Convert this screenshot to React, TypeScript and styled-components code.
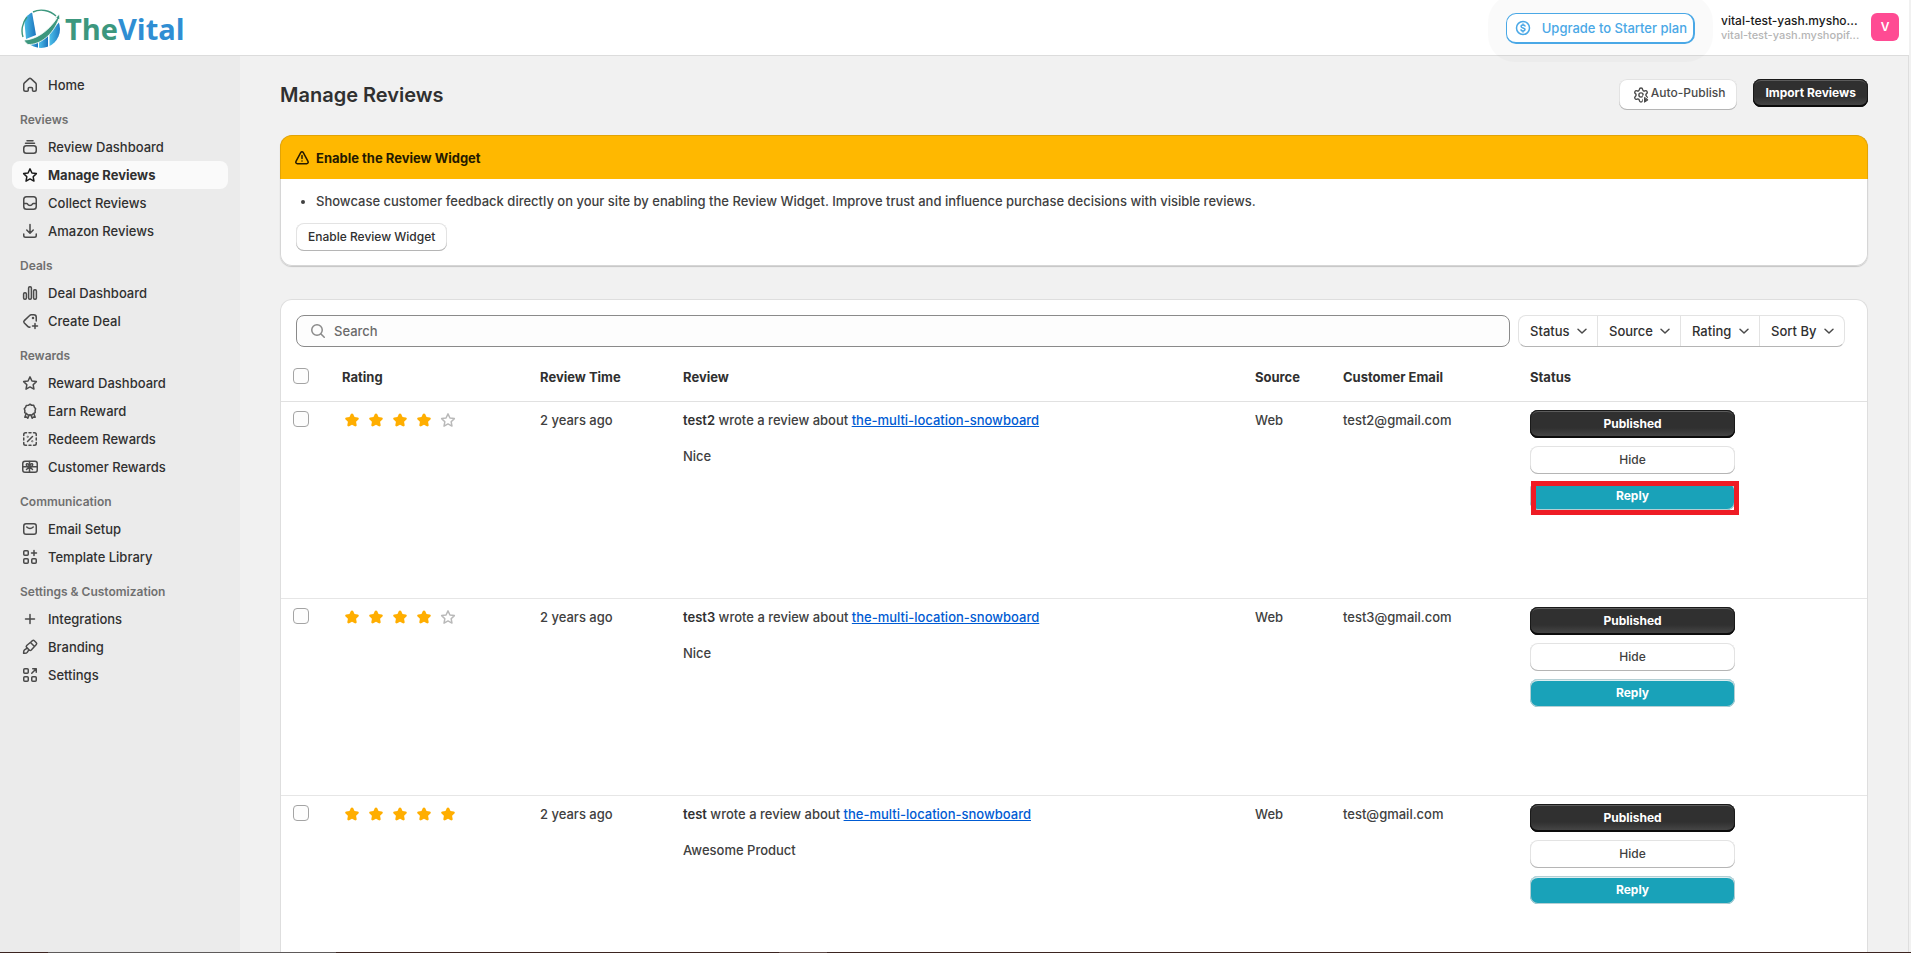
import React from "react";
import styled, { createGlobalStyle, css } from "styled-components";

const GlobalStyle = createGlobalStyle`
  *, *::before, *::after { box-sizing: border-box; }
  body {
    margin: 0;
    background: #f1f1f1;
    color: #303030;
    font-family: Inter, "Liberation Sans", sans-serif;
    font-size: 13px;
    line-height: 20px;
    font-weight: 450;
  }
  button, input, select { font: inherit; color: inherit; margin: 0; }
  button { cursor: pointer; }
  h1, h2, p, ul { margin: 0; }
`;

/* ---------- page frame ---------- */

const Page = styled.div`
  display: grid;
  grid-template-rows: auto minmax(0, 1fr) 1px;
  height: 100vh;
  overflow: hidden;
`;

const TopBar = styled.header`
  display: flex;
  align-items: flex-start;
  justify-content: space-between;
  height: 56px;
  margin-right: 2px;
  padding: 9px 10px 0 20px;
  background: #fff;
  border-bottom: 1px solid #dcdcdc;
  z-index: 1;
`;

const Body = styled.div`
  display: grid;
  grid-template-columns: 240px minmax(0, 1fr);
  min-height: 0;
  margin-right: 2px;
  border-right: 1px solid #dedede;
`;

const Taskbar = styled.div`
  background: linear-gradient(
    90deg,
    #3b2420 48px,
    #5e5a5a 48px 336px,
    #3b2420 336px 779px,
    #5e4a46 779px 827px,
    #3b2420 827px
  );
`;

/* ---------- top bar ---------- */

const Brand = styled.a`
  display: flex;
  align-items: center;
  gap: 3px;
  color: #3c977e;
  font-family: "Open Sans", "Liberation Sans", sans-serif;
  font-size: 29px;
  line-height: 38px;
  font-weight: 700;
  text-decoration: none;
`;

const BrandAccent = styled.span`
  color: #2f8ed3;
`;

const Account = styled.div`
  display: flex;
  align-items: flex-start;
  padding-top: 4px;
`;

const UpgradeButton = styled.button`
  display: flex;
  align-items: center;
  gap: 9px;
  height: 31px;
  margin-right: 26px;
  padding: 0 6px;
  background: #fff;
  border: solid #4aa8e6;
  border-width: 1px 2px 2px 1px;
  border-radius: 10px;
  box-shadow: 0 0 0 18px rgba(0, 0, 0, 0.02);
  color: #4aa8e6;
  font-weight: 550;
`;

const Store = styled.div`
  width: 138px;
  margin-right: 12px;
  padding-top: 1px;
  line-height: 14px;
  font-weight: 550;
  white-space: nowrap;
`;

const StoreName = styled.p`
  color: #1a1a1a;
  font-size: 12px;
`;

const StoreDomain = styled.p`
  color: #b5b5b5;
  font-size: 11px;
`;

const Avatar = styled.div`
  display: grid;
  place-items: center;
  width: 28px;
  height: 28px;
  background: #ff4b93;
  border-radius: 6px;
  color: #fff;
  font-size: 12px;
  font-weight: 600;
`;

/* ---------- sidebar ---------- */

const Sidebar = styled.nav`
  padding: 15px 12px;
  background: #ebebeb;
  overflow: hidden;
`;

const NavHeading = styled.h2`
  padding: 12px 8px 4px;
  color: #707070;
  font-size: 12px;
  line-height: 18px;
  font-weight: 600;
`;

const NavLink = styled.a<{ $active?: boolean }>`
  display: flex;
  align-items: center;
  gap: 8px;
  height: 28px;
  padding: 0 8px;
  border-radius: 8px;
  color: #303030;
  font-weight: 550;
  text-decoration: none;
  svg { color: #4a4a4a; }
  ${(p) =>
    p.$active &&
    css`
      background: #fafafa;
      font-weight: 650;
      svg { color: #1a1a1a; }
    `}
`;

/* ---------- main column ---------- */

const Main = styled.main`
  display: flex;
  flex-direction: column;
  min-width: 0;
  padding: 23px 40px 0;
  overflow: hidden;
`;

const TitleRow = styled.div`
  display: flex;
  flex: none;
  align-items: flex-start;
  gap: 16px;
  height: 56px;
`;

const Title = styled.h1`
  flex: 1;
  font-size: 20px;
  line-height: 32px;
  font-weight: 600;
`;

const Button = styled.button<{ $tone?: "primary" | "teal" }>`
  height: 28px;
  padding: 0 12px;
  border: 0;
  border-radius: 8px;
  background: #fff;
  box-shadow: inset 0 -1px 0 #b5b5b5, inset 0 0 0 1px #e3e3e3;
  font-size: 12px;
  line-height: 16px;
  font-weight: 550;
  white-space: nowrap;
  ${(p) =>
    p.$tone === "primary" &&
    css`
      background: linear-gradient(180deg, #303030 64%, #4a4a4a 100%);
      box-shadow: inset 0 -2px 0 #0c0c0c, inset 0 0 0 1px #1a1a1a, inset 0 2px 0 #5c5c5c;
      color: #fff;
      font-weight: 650;
    `}
  ${(p) =>
    p.$tone === "teal" &&
    css`
      background: #19a2b9;
      box-shadow: inset 0 0 0 1px #b4cfd4, inset 0 2px 0 #dcedf0;
      color: #fff;
      font-weight: 650;
    `}
`;

const PublishButton = styled.button`
  display: flex;
  align-items: flex-start;
  height: 31px;
  padding: 6px 12px;
  border: 0;
  border-radius: 8px;
  background: #fff;
  box-shadow: inset 0 -1px 0 #b5b5b5, inset 0 0 0 1px #e3e3e3;
  color: #4a4a4a;
  font-size: 12px;
  line-height: 16px;
  font-weight: 550;
`;

const Card = styled.section`
  background: #fff;
  border: 1px solid #dedede;
  border-radius: 12px;
`;

const Banner = styled(Card)`
  flex: none;
  margin-bottom: 33px;
  border-width: 0;
  box-shadow: inset 0 0 0 1px #d6d6d6, 0 1px 1px #c4c4c4;
`;

const BannerHead = styled.header`
  display: flex;
  align-items: center;
  gap: 4px;
  height: 44px;
  padding: 0 11px;
  background: #ffb800;
  border: solid #e2a406;
  border-width: 1px 1px 0;
  border-radius: 12px 12px 0 0;
  color: #251a00;
`;

const BannerTitle = styled.h2`
  font-size: 13px;
  line-height: 20px;
  font-weight: 650;
`;

const BannerBody = styled.div`
  padding: 12px 16px 15px;
`;

const Tips = styled.ul`
  margin-bottom: 12px;
  padding-left: 20px;
  color: #404040;
`;

const ReviewsCard = styled(Card)`
  flex: 1 0 auto;
  border-bottom: 0;
  border-radius: 12px 12px 0 0;
`;

/* ---------- search and filters ---------- */

const Toolbar = styled.div`
  display: flex;
  gap: 8px;
  padding: 15px 22px 0 15px;
`;

const SearchBox = styled.label`
  display: flex;
  flex: 1;
  align-items: center;
  gap: 6px;
  height: 32px;
  padding: 0 11px;
  background: #fdfdfd;
  border: 1px solid #8a8a8a;
  border-radius: 8px;
  color: #8a8a8a;
`;

const SearchInput = styled.input`
  flex: 1;
  padding: 0;
  border: 0;
  outline: 0;
  background: transparent;
  &::placeholder { color: #6a6a6a; opacity: 1; }
`;

const Filters = styled.div`
  display: flex;
  height: 32px;
  border: 1px solid #e3e3e3;
  border-bottom-color: #b5b5b5;
  border-radius: 8px;
`;

const Filter = styled.label`
  display: grid;
  align-items: center;
  & + & { border-left: 1px solid #e3e3e3; }
  svg {
    grid-area: 1 / 1;
    justify-self: end;
    margin-right: 5px;
    color: #4a4a4a;
    pointer-events: none;
  }
`;

const FilterSelect = styled.select`
  grid-area: 1 / 1;
  height: 30px;
  padding: 0 27px 0 11px;
  border: 0;
  background: transparent;
  appearance: none;
  font-weight: 550;
`;

/* ---------- reviews table ---------- */

const Table = styled.table`
  width: 100%;
  margin-top: 12px;
  border-collapse: collapse;
  table-layout: fixed;
`;

const Col = styled.col<{ $width?: number }>`
  width: ${(p) => (p.$width ? `${p.$width}px` : "auto")};
`;

const HeadCell = styled.th`
  height: 42px;
  padding: 8px 8px 13px;
  border-bottom: 1px solid #e1e1e1;
  font-weight: 650;
  text-align: left;
  vertical-align: top;
`;

const Cell = styled.td`
  height: 197px;
  padding: 8px;
  border-bottom: 1px solid #e6e6e6;
  color: #404040;
  vertical-align: top;
`;

const CheckLabel = styled.label`
  display: flex;
  padding: 1px 4px;
`;

const Checkbox = styled.input`
  width: 16px;
  height: 16px;
  background: #fdfdfd;
  border: 1px solid #a4a4a4;
  border-radius: 4px;
  appearance: none;
`;

const Stars = styled.div`
  display: flex;
  gap: 4px;
`;

const Star = styled.svg<{ $on: boolean }>`
  width: 20px;
  height: 20px;
  fill: ${(p) => (p.$on ? "#ffae00" : "none")};
  stroke: ${(p) => (p.$on ? "none" : "#b9b9b9")};
  stroke-width: 1.5;
`;

const Author = styled.strong`
  color: #303030;
  font-weight: 600;
`;

const ProductLink = styled.a`
  color: #005bd3;
  text-decoration: underline;
`;

const ReviewText = styled.p`
  margin-top: 16px;
`;

const Actions = styled.div`
  display: grid;
  gap: 8px;
  width: 205px;
`;

const ReplySlot = styled.div`
  display: grid;
  position: relative;
`;

const Highlight = styled.span`
  position: absolute;
  inset: -1px -4px -5px 1px;
  border: 5px solid #ee1c25;
  pointer-events: none;
`;

/* ---------- icons ---------- */

const STAR =
  "M11.128 4.123c-.453-.95-1.803-.95-2.256 0l-1.39 2.912-3.199.421c-1.042.138-1.46 1.422-.697 2.146l2.34 2.222-.587 3.172c-.192 1.034.901 1.828 1.825 1.327l2.836-1.54 2.836 1.54c.924.501 2.017-.293 1.825-1.327l-.587-3.172 2.34-2.222c.762-.724.345-2.008-.697-2.146l-3.2-.421-1.389-2.912Z";
const STAR_LINE =
  "M10 3.9l1.95 4.1 4.4.6-3.2 3.1.8 4.4L10 13.95 6.05 16.1l.8-4.4-3.2-3.1 4.4-.6Z";

const IconSvg = styled.svg`
  flex: none;
  width: 20px;
  height: 20px;
  fill: none;
  stroke: currentColor;
  stroke-width: 1.5;
  stroke-linecap: round;
  stroke-linejoin: round;
`;

const shapes = {
  home: (
    <path d="M3.75 9.4c0-.6.25-1.15.7-1.55l4.4-4a1.7 1.7 0 0 1 2.3 0l4.4 4c.45.4.7.95.7 1.55v5.1c0 1-.75 1.75-1.75 1.75h-1c-.55 0-1-.45-1-1V13.5a1 1 0 0 0-1-1H9.25a1 1 0 0 0-1 1v1.75c0 .55-.45 1-1 1H5.5c-1 0-1.75-.75-1.75-1.75Z" />
  ),
  stack: (
    <>
      <path d="M7 3.75h6M5.5 6.25h9" />
      <rect x="3.75" y="8.75" width="12.5" height="7.5" rx="2.5" />
    </>
  ),
  star: <path d={STAR_LINE} />,
  inbox: (
    <>
      <rect x="3.75" y="3.75" width="12.5" height="12.5" rx="2.75" />
      <path d="M4 10.5h2.6c.5 0 .8.3 1 .7.4.8 1.1 1.3 2.4 1.3s2-.5 2.4-1.3c.2-.4.5-.7 1-.7H16" />
    </>
  ),
  download: (
    <path d="M10 3.5V12M6.75 9 10 12.25 13.25 9M3.75 13v1.5c0 1 .75 1.75 1.75 1.75h9c1 0 1.75-.75 1.75-1.75V13" />
  ),
  bars: (
    <>
      <rect x="3.6" y="9.75" width="2.8" height="6.5" rx="1.2" />
      <rect x="8.6" y="3.75" width="2.8" height="12.5" rx="1.2" />
      <rect x="13.6" y="6.75" width="2.8" height="9.5" rx="1.2" />
    </>
  ),
  tag: (
    <>
      <path d="M16.25 10V6.25a2.5 2.5 0 0 0-2.5-2.5h-2.5c-.6 0-1.2.25-1.6.7L4.3 9.6a1.7 1.7 0 0 0 0 2.4l3.7 3.6c.6.6 1.4.65 2 .4M15 12.5v5M12.5 15h5" />
      <circle cx="13" cy="7" r=".5" />
    </>
  ),
  medal: (
    <>
      <path d="M10 3.25l1.7 1 2 .1.7 1.9 1.2 1.5-.5 1.9.1 2-1.8.9L12 14H8l-1.5-1.4-1.8-.9.2-2-.6-1.9 1.3-1.5.7-1.9 2-.1Z" />
      <path d="M6.2 12.5 4.8 16.3l2-.3 1 1.3L9.2 14M13.8 12.5l1.4 3.8-2-.3-1 1.3L10.800 14" />
    </>
  ),
  discount: (
    <>
      <path d="M3.75 6.5v-1c0-1 .75-1.75 1.75-1.75h1M9 3.75h2M13.5 3.75h1c1 0 1.75.75 1.75 1.75v1M16.25 9v2M16.25 13.5v1c0 1-.75 1.75-1.75 1.75h-1M11 16.25H9M6.5 16.25h-1c-1 0-1.75-.75-1.75-1.75v-1M3.75 11V9M12.5 7.5l-5 5" />
      <circle cx="7.7" cy="7.7" r=".3" />
      <circle cx="12.3" cy="12.3" r=".3" />
    </>
  ),
  gift: (
    <>
      <rect x="2.75" y="4.25" width="14.5" height="11" rx="2.25" />
      <path d="M9.5 4.5V15M3 9.75h14M9.5 9.75C8 9.5 6 9 6.3 7.5c.4-1.5 2.7-.7 3.2 2.25.5-2.95 2.8-3.75 3.2-2.25.3 1.5-1.7 2-3.2 2.25l-3 2.75M9.5 9.75l3 2.75" />
    </>
  ),
  email: (
    <>
      <rect x="3.75" y="4.75" width="12.5" height="10.5" rx="2.25" />
      <path d="M6.75 8c2 1.9 4.5 1.9 6.5 0" />
    </>
  ),
  apps: (
    <>
      <rect x="3.75" y="3.75" width="4.5" height="4.5" rx="1" />
      <rect x="3.75" y="11.75" width="4.5" height="4.5" rx="1" />
      <rect x="11.75" y="11.75" width="4.5" height="4.5" rx="1" />
      <path d="M14 3.5v5M11.5 6h5" />
    </>
  ),
  plus: <path d="M10 5.5v9M5.5 10h9" />,
  brush: (
    <path d="M11.5 4.5l1-.9c.6-.5 1.3-.4 1.8.1l2 2c.5.5.5 1.2 0 1.8l-5 5.5c-.6.6-1.4.6-2 0l-2.700-2.600c-.5-.6-.5-1.300.1-1.900ZM7.200 11.100l-2.700 1.700c-1.200.9-.7 2.400-.9 3.500 1.300-.1 2.700.3 3.600-.9l1.700-2.500M10.500 5.500l4 4" />
  ),
  external: (
    <>
      <rect x="3.75" y="3.75" width="4.5" height="4.5" rx="1" />
      <rect x="3.75" y="11.75" width="4.5" height="4.5" rx="1" />
      <rect x="11.75" y="11.75" width="4.5" height="4.5" rx="1" />
      <path d="M11.75 8.25l4.5-4.5M12.75 3.75h3.5v3.5" />
    </>
  ),
  search: (
    <>
      <circle cx="9" cy="9" r="5.25" />
      <path d="M13 13l3.25 3.25" />
    </>
  ),
  chevron: <path d="M6 8.25 10 12l4-3.75" />,
  alert: (
    <>
      <path d="M8.7 4.6c.6-1.05 2-1.05 2.6 0l4.7 8.8c.6 1.1-.1 2.35-1.3 2.35H5.3c-1.2 0-1.9-1.25-1.3-2.35Z" />
      <path d="M10 7.5v3M10 13v.1" />
    </>
  ),
  dollar: (
    <>
      <circle cx="10" cy="10" r="6.5" />
      <path d="M12 8c-.4-.7-1.1-1-2-1-1.1 0-1.9.6-1.9 1.45C8.1 10.5 12 9.5 12 11.6c0 .85-.9 1.4-2 1.4-.9 0-1.7-.4-2-1.1M10 6v1M10 13v1" />
    </>
  ),
  gear: (
    <>
      <g transform="translate(1.6 1.6) scale(0.7)" strokeWidth="2">
        <path d="M9.671 4.136a2.34 2.34 0 0 1 4.659 0 2.34 2.34 0 0 0 3.319 1.915 2.34 2.34 0 0 1 2.33 4.033 2.34 2.34 0 0 0 0 3.831 2.34 2.34 0 0 1-2.33 4.033 2.34 2.34 0 0 0-3.319 1.915 2.34 2.34 0 0 1-4.659 0 2.34 2.34 0 0 0-3.32-1.915 2.34 2.34 0 0 1-2.33-4.033 2.34 2.34 0 0 0 0-3.831A2.34 2.34 0 0 1 6.35 6.051a2.34 2.34 0 0 0 3.319-1.915" />
        <circle cx="12" cy="12" r="3" />
      </g>
      <path d="M12.5 11v7.5l5.5-3.75Z" fill="#fff" stroke="#fff" />
      <path d="M13.5 12.75v4.5L16.75 15Z" fill="currentColor" strokeWidth="1" />
    </>
  ),
};

type IconName = keyof typeof shapes;

const Icon = ({ name }: { name: IconName }) => (
  <IconSvg viewBox="0 0 20 20" aria-hidden="true">
    {shapes[name]}
  </IconSvg>
);

const Logo = () => (
  <svg width="42" height="40" viewBox="0 0 42 40" aria-hidden="true">
    <defs>
      <linearGradient id="bar" x1="0" x2="1" y1="0" y2="0">
        <stop offset="0" stopColor="#4cc0ea" />
        <stop offset="1" stopColor="#1c74bd" />
      </linearGradient>
      <clipPath id="disc">
        <circle cx="21" cy="20" r="19" />
      </clipPath>
    </defs>
    <g clipPath="url(#disc)">
      <path d="M4 8 12 3l4 23-10 4Z" fill="url(#bar)" />
      <path d="M9 34l9-3v10H9Z" fill="url(#bar)" />
      <path d="M19 31l9-6v16h-9Z" fill="url(#bar)" />
      <path d="M29.5 24 41 11v28H29.5Z" fill="url(#bar)" />
    </g>
    <path d="M4 31C15 31 28 23 37 9l-2 .5L39.500 5l.3 6-1-1C33 26 20 36 8 35.500 6.500 34.500 5 33 4 31Z" fill="#3c977e" stroke="#fff" strokeWidth="0.8" />
    <path d="M3 28C1 22 2 14 7 8M13 3C20-.5 30 1 36 7" fill="none" stroke="#3c977e" strokeWidth="1.4" />
  </svg>
);

/* ---------- data ---------- */

type NavItem = { icon: IconName; label: string; active?: boolean };

const sections: { heading?: string; items: NavItem[] }[] = [
  { items: [{ icon: "home", label: "Home" }] },
  {
    heading: "Reviews",
    items: [
      { icon: "stack", label: "Review Dashboard" },
      { icon: "star", label: "Manage Reviews", active: true },
      { icon: "inbox", label: "Collect Reviews" },
      { icon: "download", label: "Amazon Reviews" },
    ],
  },
  {
    heading: "Deals",
    items: [
      { icon: "bars", label: "Deal Dashboard" },
      { icon: "tag", label: "Create Deal" },
    ],
  },
  {
    heading: "Rewards",
    items: [
      { icon: "star", label: "Reward Dashboard" },
      { icon: "medal", label: "Earn Reward" },
      { icon: "discount", label: "Redeem Rewards" },
      { icon: "gift", label: "Customer Rewards" },
    ],
  },
  {
    heading: "Communication",
    items: [
      { icon: "email", label: "Email Setup" },
      { icon: "apps", label: "Template Library" },
    ],
  },
  {
    heading: "Settings & Customization",
    items: [
      { icon: "plus", label: "Integrations" },
      { icon: "brush", label: "Branding" },
      { icon: "external", label: "Settings" },
    ],
  },
];

const filters = ["Status", "Source", "Rating", "Sort By"];

const reviews = [
  { author: "test2", rating: 4, text: "Nice", email: "test2@gmail.com", highlighted: true },
  { author: "test3", rating: 4, text: "Nice", email: "test3@gmail.com", highlighted: false },
  { author: "test", rating: 5, text: "Awesome Product", email: "test@gmail.com", highlighted: false },
];

const columns = ["Rating", "Review Time", "Review", "Source", "Customer Email", "Status"];

/* ---------- app ---------- */

export default function App() {
  return (
    <>
      <GlobalStyle />
      <Page>
        <TopBar>
          <Brand href="#home">
            <Logo />
            <span>
              The<BrandAccent>Vital</BrandAccent>
            </span>
          </Brand>
          <Account>
            <UpgradeButton type="button">
              <Icon name="dollar" />
              Upgrade to Starter plan
            </UpgradeButton>
            <Store>
              <StoreName>vital-test-yash.mysho...</StoreName>
              <StoreDomain>vital-test-yash.myshopif...</StoreDomain>
            </Store>
            <Avatar>V</Avatar>
          </Account>
        </TopBar>

        <Body>
          <Sidebar aria-label="Main">
            {sections.map((section, i) => (
              <React.Fragment key={i}>
                {section.heading && <NavHeading>{section.heading}</NavHeading>}
                {section.items.map((item) => (
                  <NavLink
                    key={item.label}
                    href="#"
                    $active={item.active}
                    aria-current={item.active ? "page" : undefined}
                  >
                    <Icon name={item.icon} />
                    {item.label}
                  </NavLink>
                ))}
              </React.Fragment>
            ))}
          </Sidebar>

          <Main>
            <TitleRow>
              <Title>Manage Reviews</Title>
              <PublishButton type="button">
                <Icon name="gear" />
                Auto-Publish
              </PublishButton>
              <Button type="button" $tone="primary">
                Import Reviews
              </Button>
            </TitleRow>

            <Banner>
              <BannerHead>
                <Icon name="alert" />
                <BannerTitle>Enable the Review Widget</BannerTitle>
              </BannerHead>
              <BannerBody>
                <Tips>
                  <li>
                    Showcase customer feedback directly on your site by enabling the Review Widget. Improve trust and
                    influence purchase decisions with visible reviews.
                  </li>
                </Tips>
                <Button type="button">Enable Review Widget</Button>
              </BannerBody>
            </Banner>

            <ReviewsCard>
              <Toolbar>
                <SearchBox>
                  <Icon name="search" />
                  <SearchInput type="text" placeholder="Search" aria-label="Search" />
                </SearchBox>
                <Filters>
                  {filters.map((name) => (
                    <Filter key={name}>
                      <FilterSelect aria-label={name}>
                        <option>{name}</option>
                        <option>All</option>
                      </FilterSelect>
                      <Icon name="chevron" />
                    </Filter>
                  ))}
                </Filters>
              </Toolbar>

              <Table>
                <colgroup>
                  <Col $width={53} />
                  <Col $width={198} />
                  <Col $width={143} />
                  <Col />
                  <Col $width={88} />
                  <Col $width={187} />
                  <Col $width={345} />
                </colgroup>
                <thead>
                  <tr>
                    <HeadCell>
                      <CheckLabel>
                        <Checkbox type="checkbox" aria-label="Select all reviews" />
                      </CheckLabel>
                    </HeadCell>
                    {columns.map((c) => (
                      <HeadCell key={c}>{c}</HeadCell>
                    ))}
                  </tr>
                </thead>
                <tbody>
                  {reviews.map((r) => (
                    <tr key={r.author}>
                      <Cell>
                        <CheckLabel>
                          <Checkbox type="checkbox" aria-label={`Select review by ${r.author}`} />
                        </CheckLabel>
                      </Cell>
                      <Cell>
                        <Stars role="img" aria-label={`${r.rating} out of 5`}>
                          {[1, 2, 3, 4, 5].map((n) => (
                            <Star key={n} viewBox="0 0 20 20" $on={n <= r.rating}>
                              <path d={n <= r.rating ? STAR : STAR_LINE} strokeLinejoin="round" />
                            </Star>
                          ))}
                        </Stars>
                      </Cell>
                      <Cell>2 years ago</Cell>
                      <Cell>
                        <p>
                          <Author>{r.author}</Author> wrote a review about{" "}
                          <ProductLink href="#product">the-multi-location-snowboard</ProductLink>
                        </p>
                        <ReviewText>{r.text}</ReviewText>
                      </Cell>
                      <Cell>Web</Cell>
                      <Cell>{r.email}</Cell>
                      <Cell>
                        <Actions>
                          <Button type="button" $tone="primary">
                            Published
                          </Button>
                          <Button type="button">Hide</Button>
                          <ReplySlot>
                            <Button type="button" $tone="teal">
                              Reply
                            </Button>
                            {r.highlighted && <Highlight />}
                          </ReplySlot>
                        </Actions>
                      </Cell>
                    </tr>
                  ))}
                </tbody>
              </Table>
            </ReviewsCard>
          </Main>
        </Body>
        <Taskbar />
      </Page>
    </>
  );
}
